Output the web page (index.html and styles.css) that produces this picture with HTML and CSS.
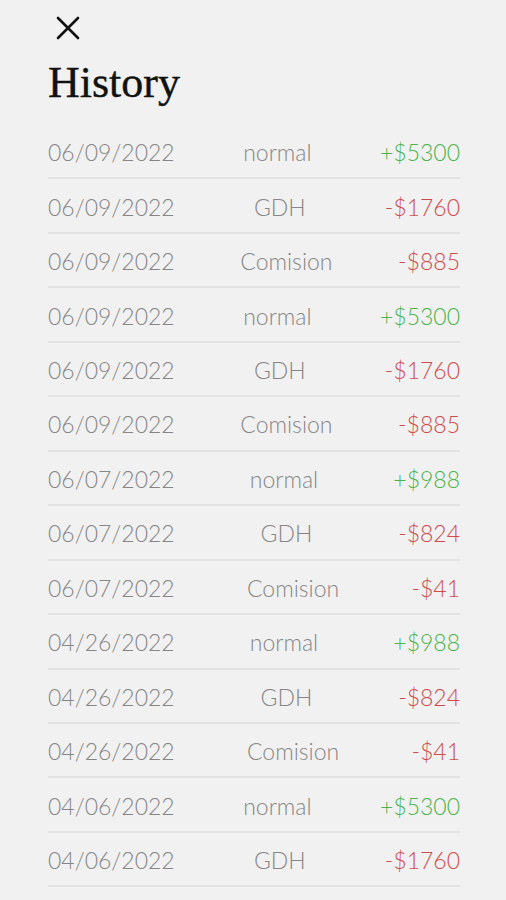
FILE: index.html
```
<!DOCTYPE html>
<html>
<head>
<meta charset="utf-8">
<link rel="stylesheet" href="styles.css">
</head>
<body>
<div class="page">
  <div class="close">
    <svg width="24" height="24" viewBox="0 0 24 24"><path d="M2 2 L22 22 M22 2 L2 22" stroke="#111" stroke-width="2.6" stroke-linecap="round" fill="none"/></svg>
  </div>
  <h1 class="title">History</h1>
  <ul class="list">
    <li class="row"><span class="date">06/09/2022</span><span class="type">normal</span><span class="amt pos">+$5300</span></li>
    <li class="row"><span class="date">06/09/2022</span><span class="type">GDH</span><span class="amt neg">-$1760</span></li>
    <li class="row"><span class="date">06/09/2022</span><span class="type">Comision</span><span class="amt neg">-$885</span></li>
    <li class="row"><span class="date">06/09/2022</span><span class="type">normal</span><span class="amt pos">+$5300</span></li>
    <li class="row"><span class="date">06/09/2022</span><span class="type">GDH</span><span class="amt neg">-$1760</span></li>
    <li class="row"><span class="date">06/09/2022</span><span class="type">Comision</span><span class="amt neg">-$885</span></li>
    <li class="row"><span class="date">06/07/2022</span><span class="type">normal</span><span class="amt pos">+$988</span></li>
    <li class="row"><span class="date">06/07/2022</span><span class="type">GDH</span><span class="amt neg">-$824</span></li>
    <li class="row"><span class="date">06/07/2022</span><span class="type">Comision</span><span class="amt neg">-$41</span></li>
    <li class="row"><span class="date">04/26/2022</span><span class="type">normal</span><span class="amt pos">+$988</span></li>
    <li class="row"><span class="date">04/26/2022</span><span class="type">GDH</span><span class="amt neg">-$824</span></li>
    <li class="row"><span class="date">04/26/2022</span><span class="type">Comision</span><span class="amt neg">-$41</span></li>
    <li class="row"><span class="date">04/06/2022</span><span class="type">normal</span><span class="amt pos">+$5300</span></li>
    <li class="row"><span class="date">04/06/2022</span><span class="type">GDH</span><span class="amt neg">-$1760</span></li>
  </ul>
</div>
</body>
</html>
```
FILE: styles.css
```
html, body {
  margin: 0;
  padding: 0;
  background: #f1f1f1;
}
body {
  font-family: "Lato", "Noto Sans", sans-serif;
  height: 900px;
  overflow: hidden;
}
.page {
  padding: 16px 46px 0 48px;
}
.close {
  margin-left: 8px;
  width: 24px;
  height: 24px;
}
.title {
  margin: 15px 0 0 0;
  font-family: "Liberation Serif", "DejaVu Serif", serif;
  font-weight: normal;
  font-size: 44px;
  line-height: 56px;
  color: #111;
  -webkit-text-stroke: 0.4px #111;
}
.list {
  list-style: none;
  margin: 14px 0 0 0;
  padding: 0;
}
.row {
  display: flex;
  justify-content: space-between;
  align-items: center;
  height: 54.46px;
  box-sizing: border-box;
  border-bottom: 2px solid #e3e3e3;
  font-size: 23px;
  font-weight: 300;
  padding-top: 2px;
}
.date { color: #868686; }
.type { color: #868686; }
.amt.pos { color: #4cb34c; }
.amt.neg { color: #cf4b4b; }
```
